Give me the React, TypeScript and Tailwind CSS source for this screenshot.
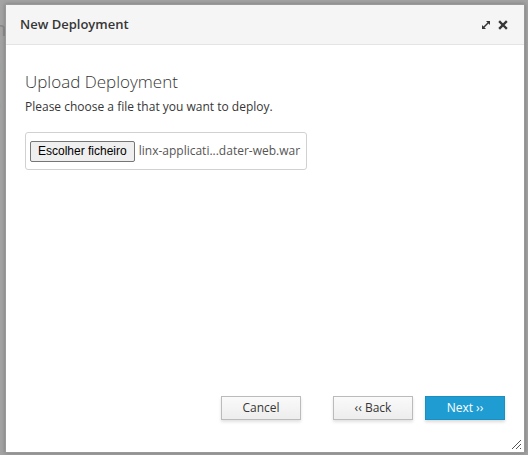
import React from 'react'

const font = { fontFamily: '"Open Sans", "Noto Sans", sans-serif' }

function ExpandIcon() {
  return (
    <svg width="10" height="10" viewBox="0 0 10 10" className="text-[#363636]">
      <path d="M1.5 8.5 L8.5 1.5" stroke="currentColor" strokeWidth="1.5" />
      <path d="M5 1 H9 V5 Z" fill="currentColor" />
      <path d="M1 5 V9 H5 Z" fill="currentColor" />
    </svg>
  )
}

function CloseIcon() {
  return (
    <svg width="10" height="10" viewBox="0 0 10 10" className="text-[#363636]">
      <path d="M2 2 L8 8 M8 2 L2 8" stroke="currentColor" strokeWidth="2.4" strokeLinecap="square" />
    </svg>
  )
}

function Grip() {
  return (
    <svg width="12" height="12" viewBox="0 0 12 12" className="absolute right-[2px] bottom-[2px]">
      <path d="M11 2 L2 11 M11 6 L6 11 M11 10 L10 11" stroke="#555" strokeWidth="1" />
    </svg>
  )
}

export default function App() {
  return (
    <div className="relative w-[528px] h-[455px] bg-[#a3a3a3] overflow-hidden pt-[4px] pl-[5px] pr-[3px] pb-[2px]" style={font}>
      {/* faint backdrop text peeking at the left edge */}
      <div className="absolute left-[-6px] top-[18px] flex flex-col text-[#8a8a8a] leading-none">
        <span className="text-[20px] leading-[22px]">n</span>
        <span className="text-[11px] leading-[11px] mt-[10px]">e</span>
        <span className="text-[11px] leading-[11px]">d</span>
        <span className="text-[11px] leading-[11px] mt-[26px]">n</span>
      </div>

      <div className="relative flex flex-col h-full bg-white border border-[#9a9a9a] shadow-[0_0_4px_rgba(0,0,0,0.25)]">
        {/* Header */}
        <div className="flex items-center h-[40px] px-[14px] bg-[#f5f5f5] border-b border-[#e4e4e4]">
          <h4 className="text-[13px] font-semibold text-[#363636]">New Deployment</h4>
          <div className="ml-auto flex items-center gap-[7px] pr-[2px]">
            <ExpandIcon />
            <CloseIcon />
          </div>
        </div>

        {/* Body */}
        <div className="flex-1 px-[19px] pt-[26px]">
          <h2 className="text-[17px] font-light text-[#363636] leading-[22px]">Upload Deployment</h2>
          <p className="mt-[6px] text-[12px] text-[#363636] leading-[16px]">Please choose a file that you want to deploy.</p>

          <div className="mt-[17px] w-[282px] h-[38px] flex items-center px-[4px] border border-[#d1d1d1] rounded-[3px]">
            <span
              className="h-[21px] px-[7px] flex items-center text-[12px] text-black bg-[#efefef] border border-[#767676] rounded-[2px]"
              style={{ fontFamily: '"Liberation Sans", Arial, sans-serif' }}
            >
              Escolher ficheiro
            </span>
            <span className="ml-[4px] text-[12px] text-[#555]">linx-applicati...dater-web.war</span>
          </div>
        </div>

        {/* Footer */}
        <div className="flex items-center justify-end px-[19px] pb-[32px]">
          <button className="w-[80px] h-[24px] text-[12px] text-[#363636] bg-gradient-to-b from-[#fafafa] to-[#ededed] border border-[#bbb] shadow-[0_2px_3px_rgba(0,0,0,0.12)]">
            Cancel
          </button>
          <button className="ml-[32px] w-[80px] h-[24px] text-[12px] text-[#363636] bg-gradient-to-b from-[#fafafa] to-[#ededed] border border-[#bbb] shadow-[0_2px_3px_rgba(0,0,0,0.12)]">
            ‹‹ Back
          </button>
          <button className="ml-[12px] w-[80px] h-[24px] text-[12px] text-white bg-[#1f9dd3] border border-[#1b8fc2] shadow-[0_2px_3px_rgba(0,0,0,0.15)]">
            Next ››
          </button>
        </div>
        <Grip />
      </div>
    </div>
  )
}
